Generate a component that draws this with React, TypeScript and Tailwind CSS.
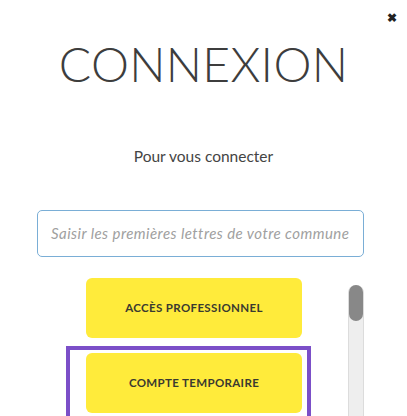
import React from "react";

export default function App() {
  return (
    <div
      className="relative w-[407px] h-[416px] overflow-hidden bg-white text-[#444]"
      style={{ fontFamily: "Lato, 'Open Sans', sans-serif" }}
    >
      <button className="absolute right-[10px] top-[12px] text-[12px] leading-none font-bold text-[#222]">
        ✖
      </button>
      <div className="flex flex-col items-center">
        <h1 className="mt-[40px] text-[48px] leading-none font-light tracking-[0.3px] text-[#3d3d3d]">
          CONNEXION
        </h1>
        <p className="mt-[58px] text-[15.5px] leading-[20px] text-[#444]">Pour vous connecter</p>
      </div>
      <div className="ml-[37px] mt-[44px] w-[327px] h-[47px] rounded-[5px] border border-[#7aaed6] flex items-center px-[13px]">
        <span className="italic text-[15px] tracking-[0.45px] text-[#a0a0a0] whitespace-nowrap">
          Saisir les premières lettres de votre commune
        </span>
      </div>
      <div className="mt-[21px] flex">
        <div className="flex flex-col">
          <div className="ml-[86px] w-[216px] h-[60px] rounded-[6px] bg-[#ffeb3b] flex items-center justify-center text-[11.5px] tracking-[0.35px] font-bold text-[#3a3a30]">
            ACCÈS PROFESSIONNEL
          </div>
          <div className="ml-[66px] mt-[8px] border-[4px] border-[#7b4fc8] pl-[16px] pr-[5px] pt-[3px] pb-[6px]">
            <div className="w-[216px] h-[60px] rounded-[6px] bg-[#ffeb3b] flex items-center justify-center text-[11.5px] tracking-[0.35px] font-bold text-[#3a3a30]">
              COMPTE TEMPORAIRE
            </div>
          </div>
        </div>
        <div className="ml-[37px] mt-[7px] w-[16px] h-[140px] rounded-t-[8px] bg-[#eeeeee] border-x border-[#dcdcdc] flex flex-col">
          <div className="w-[14px] h-[36px] rounded-[7px] bg-[#888888]" />
        </div>
      </div>
    </div>
  );
}
